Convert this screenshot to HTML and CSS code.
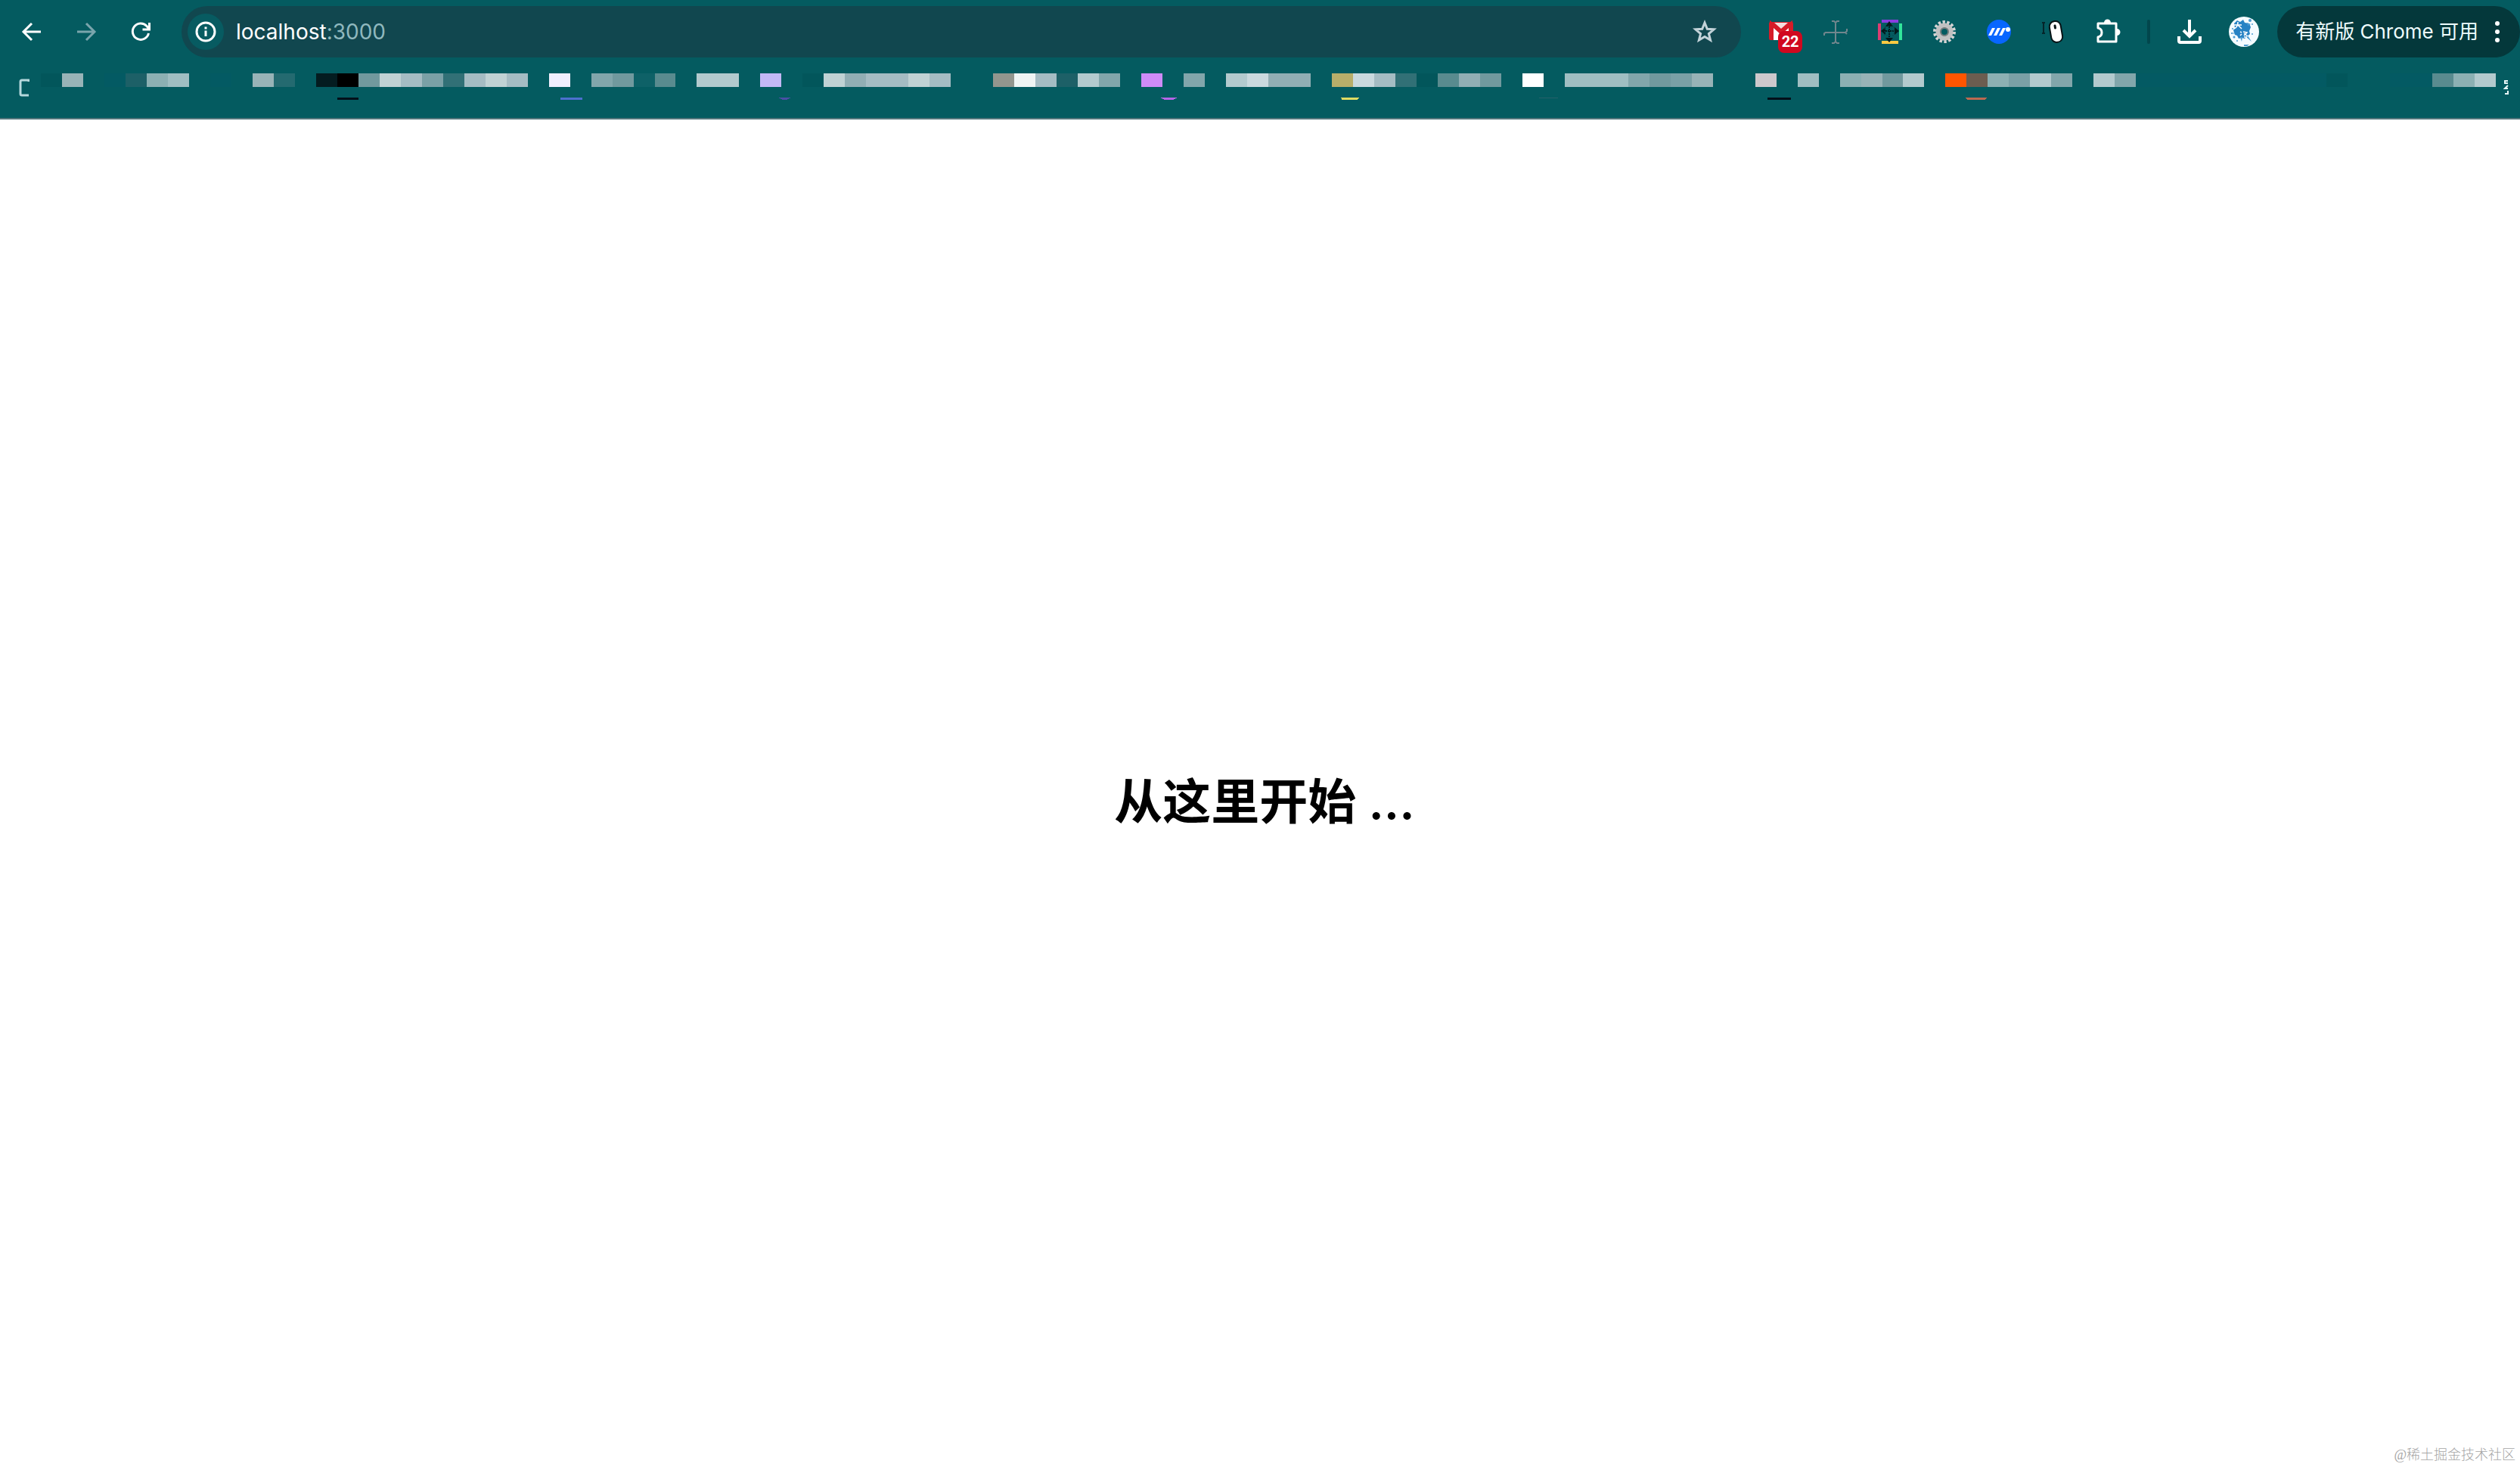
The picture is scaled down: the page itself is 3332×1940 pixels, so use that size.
FILE: index.html
```html
<!DOCTYPE html>
<html lang="zh-CN">
<head>
<meta charset="utf-8">
<title>localhost:3000</title>
<link rel="stylesheet" href="styles.css">
</head>
<body>
<header class="chrome">
  <div class="toolbar">
    <nav class="nav" aria-label="导航">
      <button class="tool" aria-label="后退"><svg class="icon" viewBox="0 0 32 32" fill="none" stroke="#fff" stroke-width="3"><path d="M28 16H6M16 5 5 16l11 11"/></svg></button>
      <button class="tool" aria-label="前进"><svg class="icon" viewBox="0 0 32 32" fill="none" stroke="#7aa5ac" stroke-width="3"><path d="M4 16h22M16 5l11 11-11 11"/></svg></button>
      <button class="tool" aria-label="刷新"><svg class="icon" viewBox="0 0 32 32" fill="none" stroke="#fff" stroke-width="3"><path d="M26.500 18A10.700 10.700 0 1 1 24 8.500l3 3.500M27.500 4v9h-9"/></svg></button>
    </nav>
    <div class="address">
      <button class="site-info" aria-label="网站信息"><svg class="icon" viewBox="0 0 32 32" fill="none" stroke="#fff" stroke-width="3"><circle cx="16" cy="16" r="12"/><path d="M16 14.500V22M16 9.500v3"/></svg></button>
      <a class="url" href="http://localhost:3000">localhost<span class="port">:3000</span></a>
      <button class="star" aria-label="收藏"><svg class="icon" viewBox="0 0 32 32" fill="none" stroke="#c3d3d9" stroke-width="3"><path d="m16 4 3.300 8.200 8.900.6-6.800 5.700 2.200 8.600L16 22.400l-7.600 4.700 2.200-8.600-6.800-5.700 8.900-.6z"/></svg></button>
    </div>
    <div class="extensions">
      <button class="tool mail" aria-label="邮件，22 封未读"><svg class="icon" viewBox="0 0 32 32"><rect x="0" y="3" width="32" height="24" rx="2" fill="#d61c28"/><path d="M7 4h18l-9 8z" fill="#f6dedd"/><path d="M6 11l10 9 10-9v16H6z" fill="#fff"/><path d="M3 27V5l13 11L29 5v22" fill="none" stroke="#d61c28" stroke-width="4"/></svg><span class="badge">22</span></button>
      <button class="tool" aria-label="测量"><svg class="icon" viewBox="0 0 32 32" fill="none" stroke="#71868d" stroke-width="2"><path d="M16 3v27M11 2h3l2 2 2-2h3M11 31h3l2-2 2 2h3M2 17h28M1 21v-3l2-1M31 12v3l-2 2 2 2"/></svg></button>
      <button class="tool" aria-label="间距"><svg class="icon" viewBox="0 0 32 32"><path d="M5 0h22v4H5z" fill="#883ee0"/><path d="M5 28h22v4H5z" fill="#fdca42"/><path d="M0 5h4v22H0z" fill="#dc3c72"/><path d="M28 5h4v22h-4z" fill="#32e59b"/><path d="M15 2l5 7H10zM15 30l5-6H10zM4 15l6-5v10zM28 15l-6-5v10z" fill="#02191c"/><path d="M15 9v15M10 15h12" stroke="#02191c" stroke-width="2" stroke-dasharray="2 1"/><rect x="9" y="9" width="12" height="12" fill="none" stroke="#034a50" stroke-width="1" stroke-dasharray="2 2"/></svg></button>
      <button class="tool" aria-label="设置"><svg class="icon" viewBox="0 0 32 32" fill="none"><circle cx="16" cy="16" r="12.500" stroke="#d4d4d4" stroke-width="5" stroke-dasharray="3.300 2.310"/><circle cx="16" cy="16" r="8.500" stroke="#c1c1c1" stroke-width="6"/><circle cx="16" cy="16" r="5" stroke="#777d7d" stroke-width="2"/></svg></button>
      <button class="tool" aria-label="扩展"><svg class="icon" viewBox="0 0 32 32"><circle cx="16" cy="16" r="16" fill="#0866ff"/><g fill="#fff"><path d="M2 21 7 11h4L6 21zM9 21l5-10h4l-5 10zM16 21l5-10h4l-5 10z"/><circle cx="28" cy="13" r="3"/></g></svg></button>
      <button class="tool" aria-label="鼠标"><svg class="icon" viewBox="0 0 32 32"><path d="M3 4v14M1 4h4M1 18h4" stroke="#04252a" stroke-width="2"/><rect x="12" y="2" width="15" height="28" rx="7" fill="#fff" stroke="#071316" stroke-width="2" transform="rotate(-10 19 16)"/><path d="m18 8 .5 3" stroke="#071316" stroke-width="3" stroke-linecap="round"/></svg></button>
      <button class="tool" aria-label="扩展程序"><svg class="icon large" viewBox="0 0 36 36"><path d="M6 7h23v24H5v-6q5-1 5-6t-5-6V7z" fill="none" stroke="#fff" stroke-width="3" stroke-linejoin="round"/><path d="M13 6a4.500 4.500 0 0 1 9 0zM30 14a4.500 4.500 0 0 1 0 9z" fill="#fff"/></svg></button>
    </div>
    <span class="divider"></span>
    <div class="extensions">
      <button class="tool" aria-label="下载"><svg class="icon" viewBox="0 0 32 32" fill="none" stroke="#fff" stroke-width="4"><path d="M16 0v21M8 14l8 8 8-8M2 22v6q0 2 2 2h24q2 0 2-2v-6"/></svg></button>
      <button class="tool" aria-label="个人资料"><svg class="avatar" viewBox="0 0 40 40"><circle cx="20" cy="20" r="20" fill="#f4fbff"/><path d="M7 9l4-4 4 2 4-3 2 4 6 1 2 5-2 5 1 4-4 3-3 3-4-1-4 1-2-4-3-1-2-6 2-3z" fill="#2782c4"/><g fill="#4b9bd1"><circle cx="5" cy="16" r="1"/><circle cx="28" cy="5" r="2"/><circle cx="31" cy="10" r="1"/><circle cx="31" cy="23" r="1"/><circle cx="7" cy="27" r="1.500"/><circle cx="11" cy="32" r="1"/><path d="m25 25 5 8-7-6zM20 37h7l-3 2h-4zM3 21l6 1-6 1zM24 8l5 2-4 2zM15 27l2 6 1-6z"/></g><path d="M7 11h10M12 7q0 7-5 9M12 11l5 5M15 20l2 1M15 25l2-2M19 20l5 1-4 4M20 22l5 4M20 27h4" fill="none" stroke="#fff" stroke-width="1.500"/></svg></button>
    </div>
    <button class="update">有新版 Chrome 可用<svg class="dots" viewBox="0 0 6 32" fill="#fff"><circle cx="3" cy="5" r="3"/><circle cx="3" cy="16" r="3"/><circle cx="3" cy="27" r="3"/></svg></button>
  </div>
  <div class="bookmarks">
    <svg class="folder" viewBox="0 0 14 24" fill="none" stroke="#b5d8dc" stroke-width="3"><path d="M13 4V2H4Q2 2 2 4v16q0 2 2 2h9"/></svg>
    <svg class="mosaic" viewBox="0 0 116 35" preserveAspectRatio="none" shape-rendering="crispEdges">
      <g>
        <path fill="#02565b" d="M0 0h1v18H0zM36 0h1v18h-1zM65 0h1v18h-1zM108 0h1v18h-1z"/>
        <path fill="#035a63" d="M3 0h1v18H3zM8 0h1v18H8zM99 0h9v18h-9zM111 0h2v18h-2z"/>
        <path fill="#1d6067" d="M4 0h1v18H4zM48 0h1v18h-1z"/>
        <path fill="#0e6167" d="M28 0h1v18h-1z"/>
        <path fill="#98b3b7" d="M1 0h1v18H1zM10 0h1v18h-1zM86 0h1v18h-1zM78 0h1v18h-1z"/>
        <path fill="#8cb0b3" d="M5 0h1v18H5zM85 0h1v18h-1zM92 0h1v18h-1zM114 0h1v18h-1z"/>
        <path fill="#a0bec2" d="M6 0h1v18H6zM72 0h3v18h-3zM83 0h1v18h-1z"/>
        <path fill="#246a70" d="M11 0h1v18h-1z"/>
        <path fill="#041c20" d="M13 0h1v18h-1z"/>
        <path fill="#000" d="M14 0h1v18h-1z"/>
        <path fill="#71999e" d="M15 0h1v18h-1zM27 0h1v18h-1zM68 0h1v18h-1zM76 0h1v18h-1zM87 0h1v18h-1z"/>
        <path fill="#c0d2d4" d="M16 0h1v18h-1zM21 0h1v18h-1zM37 0h1v18h-1zM41 0h1v18h-1z"/>
        <path fill="#a5bcc3" d="M17 0h1v18h-1zM20 0h1v18h-1zM22 0h1v18h-1zM39 0h2v18h-2zM42 0h1v18h-1zM47 0h1v18h-1zM63 0h1v18h-1z"/>
        <path fill="#7aa0a6" d="M18 0h1v18h-1zM77 0h1v18h-1zM93 0h1v18h-1z"/>
        <path fill="#317076" d="M19 0h1v18h-1zM64 0h1v18h-1z"/>
        <path fill="#f0effe" d="M24 0h1v18h-1z"/>
        <path fill="#82a6ab" d="M26 0h1v18h-1zM50 0h1v18h-1zM54 0h1v18h-1zM75 0h1v18h-1zM95 0h1v18h-1zM98 0h1v18h-1z"/>
        <path fill="#598b8f" d="M29 0h1v18h-1zM66 0h1v18h-1zM113 0h1v18h-1z"/>
        <path fill="#b3cace" d="M31 0h2v18h-2zM49 0h1v18h-1zM56 0h1v18h-1zM88 0h1v18h-1zM94 0h1v18h-1zM97 0h1v18h-1zM115 0h1v18h-1z"/>
        <path fill="#c4b8f5" d="M34 0h1v18h-1z"/>
        <path fill="#91aeb4" d="M38 0h1v18h-1zM58 0h2v18h-2zM67 0h1v18h-1z"/>
        <path fill="#93968e" d="M45 0h1v18h-1z"/>
        <path fill="#eff4f3" d="M46 0h1v18h-1z"/>
        <path fill="#cf8bf8" d="M52 0h1v18h-1z"/>
        <path fill="#cad9de" d="M57 0h1v18h-1zM62 0h1v18h-1z"/>
        <path fill="#b8ae6a" d="M61 0h1v18h-1z"/>
        <path fill="#fff" d="M70 0h1v18h-1z"/>
        <path fill="#cdc8cc" d="M81 0h1v18h-1z"/>
        <path fill="#ff5500" d="M90 0h1v18h-1z"/>
        <path fill="#6c5d50" d="M91 0h1v18h-1z"/>
      </g>
      <g>
        <path fill="#03101a" d="M14 32h1v3h-1zM81.600 32h1.100v3h-1.100z"/>
        <path fill="#4d70cf" d="M24.550 32h1.050v3h-1.050z"/>
        <path fill="#4a4fa5" d="M34.850 32h.6l-.2 3h-.2z"/>
        <path fill="#b765e8" d="M52.900 32h.8l-.2 3h-.4z"/>
        <path fill="#e0dc62" d="M61.400 32h.9l-.1 3h-.7z"/>
        <path fill="#25616a" d="M70.800 32h.9v1h-.9z"/>
        <path fill="#bd6950" d="M90.950 32h1l-.1 3h-.8z"/>
      </g>
    </svg>
    <svg class="overflow" viewBox="0 0 8 22" fill="none" stroke="#e6f5f6" stroke-width="2"><path d="M6 2H2v3h4M6 8 2 12h4M6 15v4H2"/></svg>
  </div>
</header>
<main class="page">
  <h1 class="title">从这里开始 ...</h1>
</main>
<footer class="watermark">@稀土掘金技术社区</footer>
</body>
</html>
```
FILE: styles.css
```css
* {
  box-sizing: border-box;
}

body {
  margin: 0;
  min-height: 100vh;
  display: flex;
  flex-direction: column;
  background: #fff;
  font-family: Inter, "Noto Sans CJK SC", sans-serif;
}

button {
  margin: 0;
  padding: 0;
  border: 0;
  background: none;
  color: inherit;
  font: inherit;
}

svg {
  display: block;
}

.chrome {
  background: #045b60;
  border-bottom: 2px solid #55777d;
}

.toolbar {
  display: flex;
  align-items: center;
  height: 84px;
  padding-left: 6px;
}

.nav,
.extensions {
  display: flex;
}

.tool {
  display: flex;
  align-items: center;
  justify-content: center;
  width: 72px;
  height: 68px;
}

.icon {
  width: 32px;
  height: 32px;
}

.large {
  width: 36px;
  height: 36px;
}

.avatar {
  width: 40px;
  height: 40px;
}

.address {
  flex: 1;
  display: flex;
  align-items: center;
  height: 68px;
  margin: 0 17px 0 18px;
  padding: 0 32px 0 8px;
  border-radius: 34px;
  background: #11474f;
}

.site-info {
  display: flex;
  align-items: center;
  justify-content: center;
  width: 48px;
  height: 48px;
  border-radius: 50%;
  background: #075b61;
}

.url {
  flex: 1;
  margin-left: 16px;
  color: #fff;
  font-size: 28px;
  line-height: 40px;
  text-decoration: none;
}

.port {
  color: #8fb8be;
}

.mail {
  position: relative;
}

.badge {
  position: absolute;
  left: 32px;
  top: 33px;
  width: 32px;
  height: 29px;
  border-radius: 8px;
  background: #d1081f;
  color: #fff;
  font-family: Roboto, sans-serif;
  font-size: 20px;
  font-weight: 700;
  line-height: 29px;
  text-align: center;
}

.divider {
  width: 4px;
  height: 32px;
  margin: 0 16px;
  border-radius: 2px;
  background: #02464c;
}

.update {
  display: flex;
  align-items: center;
  gap: 22px;
  height: 68px;
  margin-left: 8px;
  padding: 0 27px 0 24px;
  border-radius: 34px;
  background: #04383b;
  color: #eefcfd;
  font-size: 26px;
  line-height: 36px;
  white-space: nowrap;
}

.dots {
  width: 6px;
  height: 32px;
}

.bookmarks {
  display: flex;
  align-items: flex-start;
  height: 72px;
  padding: 13px 14px 0 25px;
}

.folder {
  width: 14px;
  height: 24px;
  margin: 7px 15px 0 0;
}

.mosaic {
  flex: 1;
  min-width: 0;
  height: 35px;
}

.overflow {
  width: 8px;
  height: 22px;
  margin: 8px 0 0 10px;
}

.page {
  flex: 1;
  display: flex;
  align-items: center;
  justify-content: center;
  padding: 50px 0 0 12px;
}

.title {
  margin: 0;
  color: #000;
  font-size: 64px;
  font-weight: 600;
  line-height: 80px;
}

.watermark {
  padding: 0 6px 4px 0;
  color: #a5a5a5;
  font-family: "Liberation Serif", "Noto Sans CJK SC", serif;
  font-size: 18px;
  font-weight: 300;
  line-height: 24px;
  text-align: right;
}
```
